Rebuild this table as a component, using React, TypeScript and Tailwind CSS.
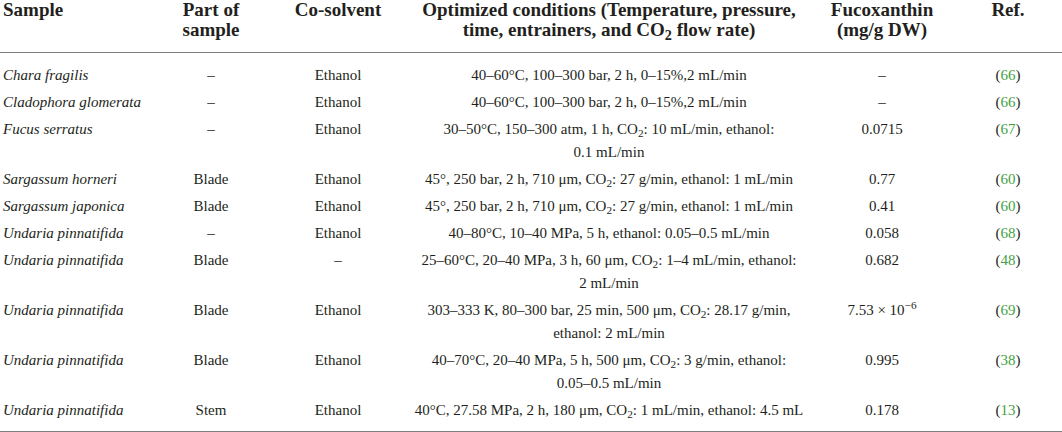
import React from 'react'

type Line = React.ReactNode

type Row = {
  sample: string
  part: string
  solvent: string
  conditions: Line[]
  fuco: React.ReactNode
  ref: string
}

const CO2 = (
  <>
    CO<sub>2</sub>
  </>
)

const ROWS: Row[] = [
  { sample: 'Chara fragilis', part: '–', solvent: 'Ethanol', conditions: ['40–60°C, 100–300 bar, 2 h, 0–15%,2 mL/min'], fuco: '–', ref: '66' },
  { sample: 'Cladophora glomerata', part: '–', solvent: 'Ethanol', conditions: ['40–60°C, 100–300 bar, 2 h, 0–15%,2 mL/min'], fuco: '–', ref: '66' },
  {
    sample: 'Fucus serratus', part: '–', solvent: 'Ethanol',
    conditions: [<>30–50°C, 150–300 atm, 1 h, {CO2}: 10 mL/min, ethanol:</>, '0.1 mL/min'],
    fuco: '0.0715', ref: '67',
  },
  {
    sample: 'Sargassum horneri', part: 'Blade', solvent: 'Ethanol',
    conditions: [<>45°, 250 bar, 2 h, 710 μm, {CO2}: 27 g/min, ethanol: 1 mL/min</>],
    fuco: '0.77', ref: '60',
  },
  {
    sample: 'Sargassum japonica', part: 'Blade', solvent: 'Ethanol',
    conditions: [<>45°, 250 bar, 2 h, 710 μm, {CO2}: 27 g/min, ethanol: 1 mL/min</>],
    fuco: '0.41', ref: '60',
  },
  { sample: 'Undaria pinnatifida', part: '–', solvent: 'Ethanol', conditions: ['40–80°C, 10–40 MPa, 5 h, ethanol: 0.05–0.5 mL/min'], fuco: '0.058', ref: '68' },
  {
    sample: 'Undaria pinnatifida', part: 'Blade', solvent: '–',
    conditions: [<>25–60°C, 20–40 MPa, 3 h, 60 μm, {CO2}: 1–4 mL/min, ethanol:</>, '2 mL/min'],
    fuco: '0.682', ref: '48',
  },
  {
    sample: 'Undaria pinnatifida', part: 'Blade', solvent: 'Ethanol',
    conditions: [<>303–333 K, 80–300 bar, 25 min, 500 μm, {CO2}: 28.17 g/min,</>, 'ethanol: 2 mL/min'],
    fuco: <span>7.53 × 10<sup>−6</sup></span>, ref: '69',
  },
  {
    sample: 'Undaria pinnatifida', part: 'Blade', solvent: 'Ethanol',
    conditions: [<>40–70°C, 20–40 MPa, 5 h, 500 μm, {CO2}: 3 g/min, ethanol:</>, '0.05–0.5 mL/min'],
    fuco: '0.995', ref: '38',
  },
  {
    sample: 'Undaria pinnatifida', part: 'Stem', solvent: 'Ethanol',
    conditions: [<>40°C, 27.58 MPa, 2 h, 180 μm, {CO2}: 1 mL/min, ethanol: 4.5 mL</>],
    fuco: '0.178', ref: '13',
  },
]

const GRID = 'grid grid-cols-[165px_92px_162px_380px_166px_86px]'

function Center({ children }: { children: React.ReactNode }) {
  return <div className="flex flex-col items-center whitespace-nowrap">{children}</div>
}

export default function App() {
  return (
    <div className="w-[1062px] h-[432px] bg-white text-[#231f20] font-['Liberation_Serif',serif] overflow-hidden">
      {/* Header */}
      <div className={`${GRID} text-[19px] leading-[20px] font-bold pb-[12px] border-b border-[#7f7f7f]`}>
        <div className="pl-[3px]">Sample</div>
        <Center>
          <span>Part of</span>
          <span>sample</span>
        </Center>
        <Center>Co-solvent</Center>
        <Center>
          <span>Optimized conditions (Temperature, pressure,</span>
          <span>time, entrainers, and {CO2} flow rate)</span>
        </Center>
        <Center>
          <span>Fucoxanthin</span>
          <span>(mg/g DW)</span>
        </Center>
        <Center>Ref.</Center>
      </div>

      {/* Body */}
      <div className="pt-[9px] pb-[7px] border-b border-[#7f7f7f] text-[15px] leading-[23px]">
        {ROWS.map((r, i) => (
          <div key={i} className={`${GRID} py-[2px]`}>
            <div className="pl-[3px] italic whitespace-nowrap">{r.sample}</div>
            <Center>{r.part}</Center>
            <Center>{r.solvent}</Center>
            <Center>
              {r.conditions.map((c, j) => (
                <span key={j}>{c}</span>
              ))}
            </Center>
            <Center>{r.fuco}</Center>
            <Center>
              <span>
                (<span className="text-[#3fa33f]">{r.ref}</span>)
              </span>
            </Center>
          </div>
        ))}
      </div>
    </div>
  )
}
